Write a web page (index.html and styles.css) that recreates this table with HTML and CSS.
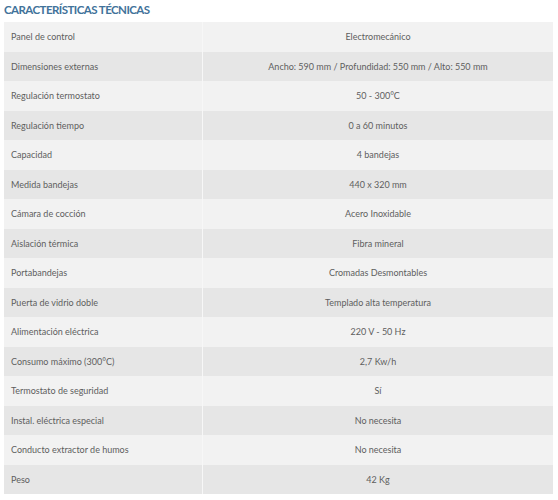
FILE: index.html
```html
<!DOCTYPE html>
<html lang="es">
<head>
<meta charset="utf-8">
<link rel="stylesheet" href="styles.css">
</head>
<body>
<div class="page">
  <h2 class="title">CARACTERÍSTICAS TÉCNICAS</h2>
  <div class="specs">
    <div class="row"><div class="k">Panel de control</div><div class="v">Electromecánico</div></div>
    <div class="row"><div class="k">Dimensiones externas</div><div class="v">Ancho: 590 mm / Profundidad: 550 mm / Alto: 550 mm</div></div>
    <div class="row"><div class="k">Regulación termostato</div><div class="v">50 - 300°C</div></div>
    <div class="row"><div class="k">Regulación tiempo</div><div class="v">0 a 60 minutos</div></div>
    <div class="row"><div class="k">Capacidad</div><div class="v">4 bandejas</div></div>
    <div class="row"><div class="k">Medida bandejas</div><div class="v">440 x 320 mm</div></div>
    <div class="row"><div class="k">Cámara de cocción</div><div class="v">Acero Inoxidable</div></div>
    <div class="row"><div class="k">Aislación térmica</div><div class="v">Fibra mineral</div></div>
    <div class="row"><div class="k">Portabandejas</div><div class="v">Cromadas Desmontables</div></div>
    <div class="row"><div class="k">Puerta de vidrio doble</div><div class="v">Templado alta temperatura</div></div>
    <div class="row"><div class="k">Alimentación eléctrica</div><div class="v">220 V - 50 Hz</div></div>
    <div class="row"><div class="k">Consumo máximo (300°C)</div><div class="v">2,7 Kw/h</div></div>
    <div class="row"><div class="k">Termostato de seguridad</div><div class="v">Sí</div></div>
    <div class="row"><div class="k">Instal. eléctrica especial</div><div class="v">No necesita</div></div>
    <div class="row"><div class="k">Conducto extractor de humos</div><div class="v">No necesita</div></div>
    <div class="row"><div class="k">Peso</div><div class="v">42 Kg</div></div>
  </div>
</div>
</body>
</html>
```

FILE: styles.css
```css
html, body {
  margin: 0;
  padding: 0;
  background: #ffffff;
}
.page {
  padding: 2px 5px 0 4px;
  font-family: Lato, "Open Sans", sans-serif;
}
.title {
  margin: 0 0 5px 0;
  font-size: 11.5px;
  line-height: 15px;
  font-weight: 700;
  color: #41729a;
  letter-spacing: -0.55px;
}
.specs {
  display: flex;
  flex-direction: column;
}
.row {
  display: grid;
  grid-template-columns: 199px 1fr;
  height: 29.5px;
  background: #f2f2f2;
}
.row:nth-child(even) {
  background: #e6e6e6;
}
.k, .v {
  display: flex;
  align-items: center;
  font-size: 9px;
  color: #5e5e5e;
}
.k {
  padding-left: 7px;
  border-right: 1px solid #f7f7f7;
}
.v {
  justify-content: center;
}
```
